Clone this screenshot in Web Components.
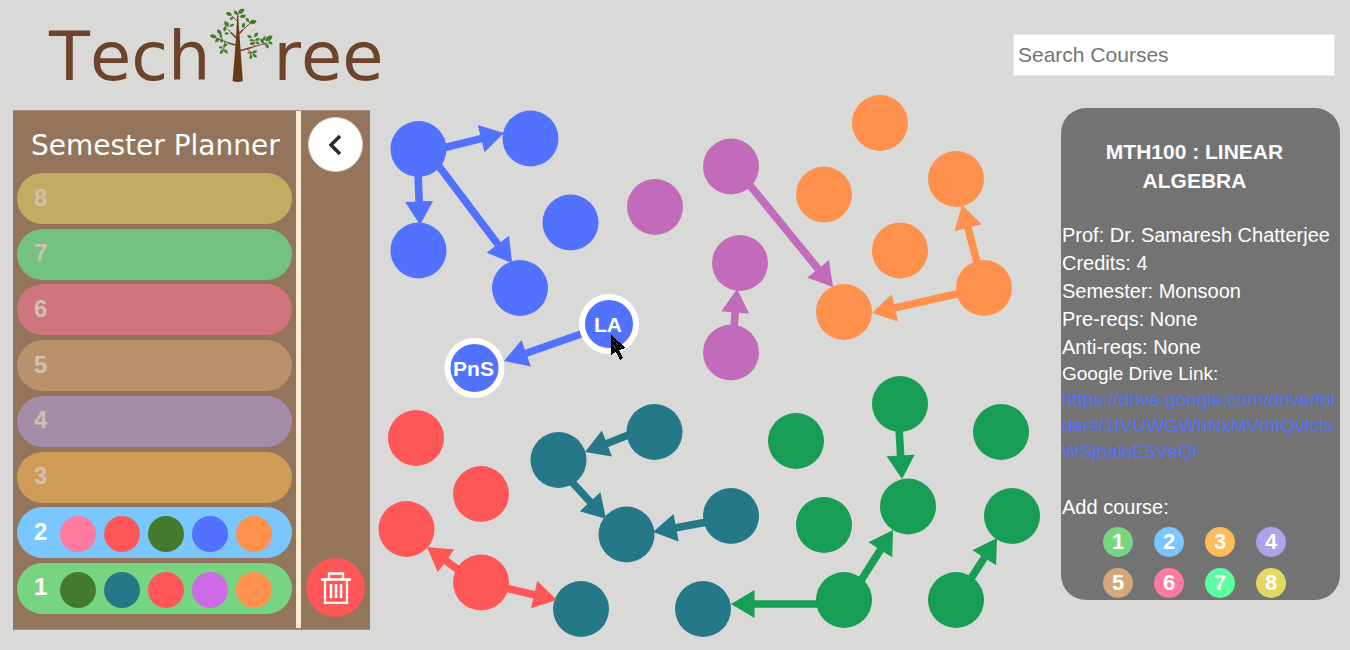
<!DOCTYPE html>
<html lang="en">
<head>
<meta charset="utf-8">
<title>TechTree</title>
<style>
  body { margin: 0; background: #d9d9d7; font-family: "Liberation Sans", Arial, sans-serif; }
</style>
</head>
<body>
<tech-tree-app></tech-tree-app>

<template id="app-template">
  <style>
    :host { display: block; }
    header { display: flex; justify-content: space-between; align-items: flex-end; height: 90px; padding: 0 15px 0 49px; box-sizing: border-box; }
    course-search { margin-bottom: 14px; }
    main { display: grid; grid-template-columns: 357px minmax(0, 1fr) 279px; align-items: start; padding: 0 10px 0 13px; }
    semester-planner { margin-top: 20px; }
    course-details { margin-top: 18px; }
  </style>
  <header>
    <tree-logo></tree-logo>
    <course-search></course-search>
  </header>
  <main>
    <semester-planner>
      <span slot="title">Semester Planner</span>
      <semester-row number="8" color="#c2ac62" dim></semester-row>
      <semester-row number="7" color="#74c280" dim></semester-row>
      <semester-row number="6" color="#d0757e" dim></semester-row>
      <semester-row number="5" color="#b9916a" dim></semester-row>
      <semester-row number="4" color="#a58daa" dim></semester-row>
      <semester-row number="3" color="#cf9c58" dim></semester-row>
      <semester-row number="2" color="#7ac6ff" courses="#ff7a9f #ff5757 #447a2e #5271ff #ff914d"></semester-row>
      <semester-row number="1" color="#77d582" courses="#447a2e #257888 #ff5757 #cb6be5 #ff914d"></semester-row>
    </semester-planner>
    <course-graph></course-graph>
    <course-details>
      <span slot="title">MTH100 : LINEAR ALGEBRA</span>
      <div>Prof: Dr. Samaresh Chatterjee</div>
      <div>Credits: 4</div>
      <div>Semester: Monsoon</div>
      <div>Pre-reqs: None</div>
      <div>Anti-reqs: None</div>
    </course-details>
  </main>
</template>

<template id="logo-template">
  <style>
    :host { display: block; }
    h1 { display: flex; align-items: flex-end; margin: 0; font: 400 67px/66px "DejaVu Sans", sans-serif; font-kerning: none; color: #6f432a; }
    svg { display: block; width: 63px; height: 75px; margin: 0 0 7px; }
  </style>
  <h1 aria-label="TechTree"><span>Tech</span><svg viewBox="33 24 190 226" aria-hidden="true">
    <path fill="#673a17" d="M115 48 L118 48 Q123 120 132 244 Q117 250 101 244 Q112 120 115 48Z"/>
    <g fill="none" stroke="#74482e" stroke-linecap="round">
      <path stroke-width="5" d="M113 115 L97 99 M118 104 L131 91 M112 136 L91 130 M123 153 L158 143"/>
      <path stroke-width="3" d="M97 99 L88 89 M131 91 L152 71 M91 130 L46 112 M78 127 L74 152 M70 121 L68 110 M158 143 L203 129 M166 140 L166 121 M146 149 L165 163 M156 157 L156 168 M115 63 L101 50 M117 51 L117 42"/>
    </g>
    <g id="leaves" fill="#437a2b"></g>
  </svg><span>ree</span></h1>
</template>

<template id="search-template">
  <style>
    :host { display: block; }
    input { display: block; box-sizing: border-box; width: 322px; height: 42px; padding: 0 4px; border: 1px solid #e8e8e6; background: #fff; color: #333; font: 21px "Liberation Sans", Arial, sans-serif; }
    input::placeholder { color: #757575; opacity: 1; }
  </style>
  <input type="search" aria-label="Search Courses" placeholder="Search Courses">
</template>

<template id="planner-template">
  <style>
    :host { display: grid; grid-template-columns: 283px 5px 1fr; min-height: 520px; box-sizing: border-box; background: #94755b; border: 1px solid #a58d78; border-width: 1px 0; }
    section { display: flex; flex-direction: column; }
    h2 { margin: 0; padding: 18px 0 0 18px; height: 44px; font: 400 28px/34px "DejaVu Sans", sans-serif; color: #fff; white-space: nowrap; }
    .rows { flex: 1; display: flex; flex-direction: column; justify-content: space-between; padding: 0 4px 15px; }
    .divider { background: #fbebd0; margin-bottom: 1px; }
    .tools { display: flex; flex-direction: column; justify-content: space-between; align-items: center; padding: 6px 0 12px; }
    button { display: grid; place-items: center; padding: 0; border: 0; border-radius: 50%; }
    .back { width: 55px; height: 55px; background: #fff; border: 1px solid #d8d4d0; }
    .trash { width: 59px; height: 59px; background: #ff5757; }
  </style>
  <section>
    <h2><slot name="title"></slot></h2>
    <div class="rows"><slot></slot></div>
  </section>
  <div class="divider"></div>
  <div class="tools">
    <button class="back" aria-label="Collapse planner"><svg width="14" height="22" viewBox="0 0 14 22"><path d="M11 2 L2 11 L11 20" fill="none" stroke="#2b2b2b" stroke-width="3.500"/></svg></button>
    <button class="trash" aria-label="Delete"><svg width="32" height="32" viewBox="0 0 32 32" fill="none" stroke="#fff"><path stroke-width="2.300" d="M1 7.500H31 M9 7V1.500H23V7 M5 8V31H27V8"/><path stroke-width="2.500" d="M11 12V26 M16 12V26 M21 12V26"/></svg></button>
  </div>
</template>

<template id="row-template">
  <style>
    :host { display: flex; align-items: center; gap: 8px; height: 51px; padding-left: 17px; box-sizing: border-box; border-radius: 26px; background: var(--row); color: #fff; }
    :host([dim]) { color: #cfc0b2; }
    b { width: 18px; margin-bottom: 2px; font-size: 24px; line-height: 28px; }
    i { width: 36px; height: 36px; margin-top: 3px; border-radius: 50%; }
  </style>
  <b></b>
</template>

<template id="graph-template">
  <style>
    :host { display: block; }
    svg { display: block; width: 100%; height: auto; }
    text { font: bold 21px "Liberation Sans", Arial, sans-serif; fill: #fff; text-anchor: middle; }
  </style>
  <svg viewBox="370 90 691 560">
    <g id="nodes"></g>
    <g id="links"></g>
    <g id="active"></g>
    <g shape-rendering="crispEdges">
      <path d="M611 335 L626 348 L619 350 L623 358 L620 360 L616 352 L611 355Z" fill="#000"/>
      <path d="M613 340 L621 348 M613 345 L616 349 M618 353 L620 357" fill="none" stroke="#666" stroke-dasharray="1 1"/>
    </g>
  </svg>
</template>

<template id="details-template">
  <style>
    :host { display: block; box-sizing: border-box; padding: 29px 2px 2px 1px; border-radius: 25px; background: #737373; color: #fff; font-size: 20px; line-height: 28px; }
    h2 { margin: 0 26px 26px 15px; font-size: 21px; line-height: 29px; text-align: center; }
    .link { font-size: 19px; line-height: 26px; margin-bottom: 28px; }
    a { display: block; color: #5271ff; text-decoration: none; word-break: break-all; }
    .badges { display: grid; grid-template-columns: repeat(4, 30px); gap: 11px 21px; justify-content: center; margin: 6px 11px 0 0; }
  </style>
  <h2><slot name="title"></slot></h2>
  <slot></slot>
  <div class="link">Google Drive Link:
    <a href="https://drive.google.com/drive/folders/1tVUWGWhNxMVmtQvtclsWSjbaloE5VeQi">https://drive.google.com/drive/folders/1tVUWGWhNxMVmtQvtclsWSjbaloE5VeQi</a>
  </div>
  <div>Add course:</div>
  <div class="badges">
    <semester-badge color="#77d582">1</semester-badge>
    <semester-badge color="#7ac6ff">2</semester-badge>
    <semester-badge color="#ffbd59">3</semester-badge>
    <semester-badge color="#b1a1ec">4</semester-badge>
    <semester-badge color="#d3a777">5</semester-badge>
    <semester-badge color="#ff7a9f">6</semester-badge>
    <semester-badge color="#5cff9f">7</semester-badge>
    <semester-badge color="#e3d864">8</semester-badge>
  </div>
</template>

<template id="badge-template">
  <style>
    :host { display: block; }
    button { display: block; width: 30px; height: 30px; padding: 0; border: 0; border-radius: 50%; background: var(--badge); color: #fff; font: bold 22px/30px "Liberation Sans", Arial, sans-serif; text-align: center; }
  </style>
  <button><slot></slot></button>
</template>

<script>
  class TemplateElement extends HTMLElement {
    constructor() {
      super();
      const root = this.attachShadow({ mode: 'open' });
      root.append(document.getElementById(this.constructor.template).content.cloneNode(true));
    }
  }

  const SVG = 'http://www.w3.org/2000/svg';
  const shape = (parent, tag, attrs, text) => {
    const el = document.createElementNS(SVG, tag);
    for (const [key, value] of Object.entries(attrs)) el.setAttribute(key, value);
    if (text) el.textContent = text;
    parent.append(el);
  };

  /* Each leaf: centre x, centre y, rotation, half length. */
  const LEAVES = [
    [127,34,-35,12],[132,49,-8,10],[111,38,50,9],[90,42,22,10],[98,55,-45,7],
    [162,66,-12,12],[146,60,55,8],[134,76,-75,9],[83,72,55,11],[99,76,-25,8],
    [61,96,48,10],[78,86,-75,9],[83,101,5,7],[43,109,15,11],[55,121,-45,9],[65,107,-80,7],
    [68,156,-60,8],[81,155,50,8],[66,143,15,7],[79,136,-25,8],[67,124,30,6],
    [152,110,20,8],[172,105,-50,9],[158,121,5,7],[176,119,-15,8],[160,131,-5,8],[176,129,8,7],
    [211,115,-35,13],[197,116,-70,8],[190,123,60,9],[205,138,65,9],[215,129,25,8],[195,131,20,6],
    [168,156,-12,8],[168,168,35,8],[156,171,-85,8],[150,159,0,5]
  ];

  class TreeLogo extends TemplateElement {
    static template = 'logo-template';
    connectedCallback() {
      const group = this.shadowRoot.getElementById('leaves');
      for (const [x, y, angle, size] of LEAVES) {
        shape(group, 'path', {
          d: `M${-size} 0 Q0 ${-size * 1.1} ${size} 0 Q0 ${size * 1.1} ${-size} 0Z`,
          transform: `translate(${x} ${y}) rotate(${angle})`
        });
      }
    }
  }

  class CourseSearch extends TemplateElement { static template = 'search-template'; }
  class SemesterPlanner extends TemplateElement { static template = 'planner-template'; }

  class SemesterRow extends TemplateElement {
    static template = 'row-template';
    connectedCallback() {
      this.style.setProperty('--row', this.getAttribute('color'));
      this.shadowRoot.querySelector('b').textContent = this.getAttribute('number');
      for (const color of (this.getAttribute('courses') || '').split(' ').filter(Boolean)) {
        const dot = document.createElement('i');
        dot.style.background = color;
        this.shadowRoot.append(dot);
      }
    }
  }

  const BLUE = '#5271ff', PURPLE = '#c26bba', ORANGE = '#ff914d', RED = '#ff5757', TEAL = '#257888', GREEN = '#189d54';

  const NODES = {
    [BLUE]: [[418.5,149],[530.5,138.5],[418.5,250.5],[570.5,222.5],[520,288]],
    [PURPLE]: [[655,207],[731,166.5],[740,263],[731,352.5]],
    [ORANGE]: [[880,123],[824,194.5],[900,250.5],[956,179],[984,288],[844,312]],
    [RED]: [[416,438],[481,494],[406.5,529],[481,582.5]],
    [TEAL]: [[654.5,432],[558.5,460],[626.5,534.5],[731,516],[581,609],[703,609]],
    [GREEN]: [[796,441],[900,404],[1001,432],[908,506.5],[824,525],[1012,516],[844,600],[956,600]]
  };

  const ACTIVE = [[609,324,'LA'],[474.5,368,'PnS']];

  /* Each link: start x, start y, tip x, tip y. */
  const LINKS = {
    [BLUE]: [[443,148,504,133],[418,172,420,225],[438,165,512,263],[581,334,504,361]],
    [PURPLE]: [[748,183,833,287],[734,328,737,289]],
    [ORANGE]: [[978,266,962,205],[961,293,872,313]],
    [RED]: [[460,571,427,547],[505,588,557,600]],
    [TEAL]: [[631,434,585,452],[571,481,606,519],[707,522,653,532]],
    [GREEN]: [[899,428,902,479],[860,582,893,530],[821,604,731,604],[970,580,997,538]]
  };

  class CourseGraph extends TemplateElement {
    static template = 'graph-template';
    connectedCallback() {
      const layer = id => this.shadowRoot.getElementById(id);
      for (const [fill, nodes] of Object.entries(NODES))
        for (const [cx, cy] of nodes) shape(layer('nodes'), 'circle', { cx, cy, r: 28, fill });
      for (const [fill, links] of Object.entries(LINKS))
        for (const [x1, y1, x2, y2] of links) {
          const length = Math.hypot(x2 - x1, y2 - y1);
          const angle = Math.atan2(y2 - y1, x2 - x1) * 180 / Math.PI;
          const neck = length - 23.5;
          shape(layer('links'), 'path', {
            fill,
            d: `M0 -3.800 H${neck} V-14 L${length} 0 L${neck} 14 V3.800 H0Z`,
            transform: `translate(${x1} ${y1}) rotate(${angle})`
          });
        }
      for (const [cx, cy, label] of ACTIVE) {
        shape(layer('active'), 'circle', { cx, cy, r: 27, fill: BLUE, stroke: '#fff', 'stroke-width': 6 });
        shape(layer('active'), 'text', { x: cx - 1, y: cy + 8 }, label);
      }
    }
  }

  class SemesterBadge extends TemplateElement {
    static template = 'badge-template';
    connectedCallback() { this.style.setProperty('--badge', this.getAttribute('color')); }
  }

  class CourseDetails extends TemplateElement { static template = 'details-template'; }
  class TechTreeApp extends TemplateElement { static template = 'app-template'; }

  customElements.define('tree-logo', TreeLogo);
  customElements.define('course-search', CourseSearch);
  customElements.define('semester-row', SemesterRow);
  customElements.define('semester-planner', SemesterPlanner);
  customElements.define('course-graph', CourseGraph);
  customElements.define('semester-badge', SemesterBadge);
  customElements.define('course-details', CourseDetails);
  customElements.define('tech-tree-app', TechTreeApp);
</script>
</body>
</html>
